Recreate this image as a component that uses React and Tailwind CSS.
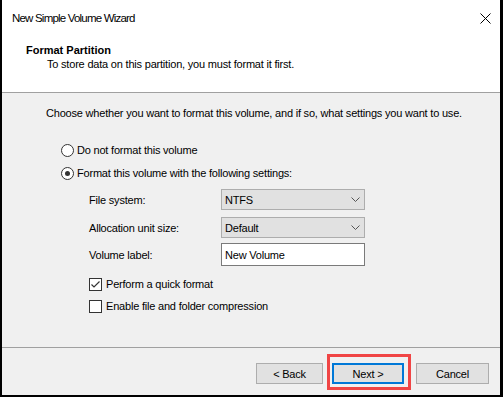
import React from "react";

const Radio = ({ checked, label }) => (
  <div className="flex items-center h-4">
    <span className="w-[13px] h-[13px] rounded-full border border-[#333] bg-white flex items-center justify-center">
      {checked && <span className="w-[5px] h-[5px] rounded-full bg-[#333]"></span>}
    </span>
    <span className="ml-[3px]">{label}</span>
  </div>
);

const Checkbox = ({ checked, label }) => (
  <div className="flex items-center h-4">
    <span className="w-[13px] h-[13px] border border-[#333] bg-white flex items-center justify-center">
      {checked && (
        <svg width="11" height="11" viewBox="0 0 11 11">
          <path d="M1.5 5.5 L4 8 L9.5 2.5" fill="none" stroke="#333" strokeWidth="1.2" />
        </svg>
      )}
    </span>
    <span className="ml-[4px]">{label}</span>
  </div>
);

const Chevron = () => (
  <svg width="9" height="5" viewBox="0 0 9 5" className="mr-[4px]">
    <path d="M0.5 0.5 L4.5 4.5 L8.5 0.5" fill="none" stroke="#555" strokeWidth="1" />
  </svg>
);

const Field = ({ label, children }) => (
  <div className="flex items-center">
    <span className="w-[132px]">{label}</span>
    {children}
  </div>
);

const Select = ({ value }) => (
  <div className="w-[144px] h-[21px] border border-[#adadad] bg-[#e1e1e1] flex items-center justify-between pl-[3px]">
    <span>{value}</span>
    <Chevron />
  </div>
);

const Button = ({ children, primary, width }) => (
  <div
    className={
      "h-[21px] flex items-center justify-center bg-[#e1e1e1] " +
      (primary ? "border-2 border-[#0078d7] " : "border border-[#adadad] ") +
      width
    }
  >
    {children}
  </div>
);

export default function App() {
  return (
    <div
      className="w-[503px] h-[397px] flex flex-col border-l-2 border-r-[3px] border-b-2 border-black text-[11px] tracking-[-0.2px] leading-4 text-black"
      style={{ fontFamily: '"Liberation Sans", Arial, sans-serif' }}
    >
      {/* Header */}
      <div className="h-[93px] shrink-0 bg-white border-b border-[#a0a0a0]">
        <div className="flex justify-between pt-[10px] pl-[10px] pr-[9px]">
          <span className="text-[11.5px] tracking-[-0.8px]">New Simple Volume Wizard</span>
          <svg width="11" height="11" viewBox="0 0 11 11" className="mt-[3px]">
            <path d="M0.5 0.5 L10.5 10.5 M10.5 0.5 L0.5 10.5" stroke="#000" strokeWidth="1" />
          </svg>
        </div>
        <div className="mt-[17px] pl-[24px] font-bold leading-[14px] tracking-[0px]">Format Partition</div>
        <div className="pl-[45px] leading-[14px]">To store data on this partition, you must format it first.</div>
      </div>

      {/* Body */}
      <div className="h-[254px] shrink-0 bg-[#f0f0f0] pt-[12px]">
        <div className="pl-[44px] whitespace-nowrap">
          Choose whether you want to format this volume, and if so, what settings you want to use.
        </div>
        <div className="pl-[59px] mt-[21px]">
          <Radio label="Do not format this volume" />
          <div className="mt-[7px]">
            <Radio checked label="Format this volume with the following settings:" />
          </div>
        </div>
        <div className="pl-[87px] mt-[8px] flex flex-col">
          <Field label="File system:">
            <Select value="NTFS" />
          </Field>
          <div className="mt-[7px]">
            <Field label="Allocation unit size:">
              <Select value="Default" />
            </Field>
          </div>
          <div className="mt-[5px]">
            <Field label="Volume label:">
              <div className="w-[144px] h-[23px] border border-[#7a7a7a] bg-white flex items-center pl-[3px]">
                New Volume
              </div>
            </Field>
          </div>
          <div className="mt-[10px]">
            <Checkbox checked label="Perform a quick format" />
          </div>
          <div className="mt-[6px]">
            <Checkbox label="Enable file and folder compression" />
          </div>
        </div>
      </div>

      {/* Footer */}
      <div className="flex-1 bg-[#f0f0f0] border-t border-[#a0a0a0] flex justify-end items-start pt-[15px] pr-[11px]">
        <Button width="w-[67px]">&lt; Back</Button>
        <div className="relative ml-[9px]">
          <Button primary width="w-[72px]">Next &gt;</Button>
          <div className="absolute -left-[5px] -right-[7px] -top-[9px] -bottom-[6px] border-[3px] border-[#f04545] pointer-events-none"></div>
        </div>
        <div className="ml-[12px]">
          <Button width="w-[73px]">Cancel</Button>
        </div>
      </div>
    </div>
  );
}
